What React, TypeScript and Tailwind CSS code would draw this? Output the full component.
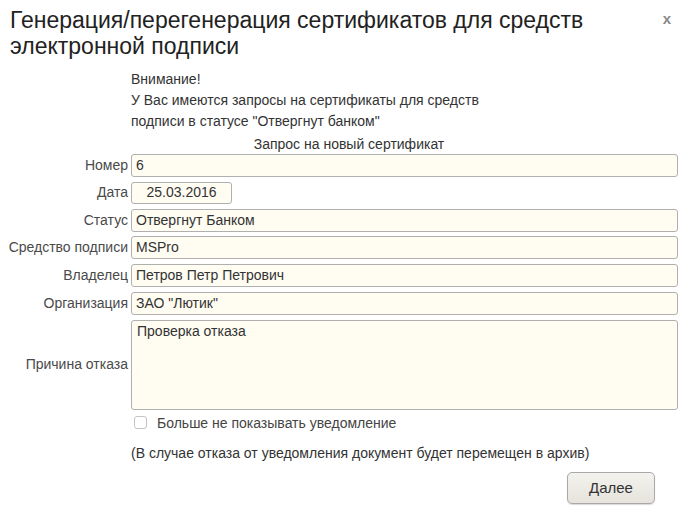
import React from "react";

const font = { fontFamily: '"Liberation Sans", Arial, sans-serif' };

function Field({ label, value, narrow }: { label: string; value: string; narrow?: boolean }) {
  return (
    <>
      <div className="flex items-center justify-end pr-[3px] text-[14px] text-[#4a4a4a] whitespace-nowrap">{label}</div>
      <div className={narrow ? "w-[101px] h-[22px] rounded-[3px] border border-[#b0b0b0] bg-[#fffcf2] flex items-center justify-center text-[14px] text-[#333]" : "h-[23px] rounded-[3px] border border-[#b0b0b0] bg-[#fffcf2] flex items-center pl-[4px] text-[14px] text-[#333]"}>
        {value}
      </div>
    </>
  );
}

export default function App() {
  return (
    <div style={font} className="w-[688px] h-[516px] bg-white text-[#333] flex flex-col">
      {/* Header */}
      <div className="flex justify-between pl-[10px] pr-[17px] pt-[7px]">
        <h1 className="text-[23px] leading-[26px] text-[#222]">
          Генерация/перегенерация сертификатов для средств
          <br />
          электронной подписи
        </h1>
        <span className="text-[15px] leading-[18px] font-bold text-[#8a8a8a] mt-[3px]">x</span>
      </div>

      {/* Notice */}
      <div className="pl-[131px] mt-[10px] text-[14px] leading-[21px] text-[#333]">
        <div>Внимание!</div>
        <div>У Вас имеются запросы на сертификаты для средств</div>
        <div>подписи в статусе "Отвергнут банком"</div>
      </div>
      <div className="pl-[10px] text-center text-[14px] leading-[20px] text-[#333] mt-[2px]">Запрос на новый сертификат</div>

      {/* Form */}
      <div className="grid grid-cols-[131px_1fr] gap-y-[4.8px] pr-[10px]">
        <Field label="Номер" value="6" />
        <Field label="Дата" value="25.03.2016" narrow />
        <Field label="Статус" value="Отвергнут Банком" />
        <Field label="Средство подписи" value="MSPro" />
        <Field label="Владелец" value="Петров Петр Петрович" />
        <Field label="Организация" value={'ЗАО "Лютик"'} />
        <div className="flex items-center justify-end pr-[3px] text-[14px] text-[#4a4a4a]">Причина отказа</div>
        <div className="h-[90px] rounded-[3px] border border-[#b0b0b0] bg-[#fffcf2] px-[5px] pt-[1px] text-[14px] leading-[18px] text-[#333]">
          Проверка отказа
        </div>
      </div>

      {/* Checkbox */}
      <label className="flex items-center pl-[134px] mt-[5px] gap-[10px] text-[14px] leading-[16px] text-[#444]">
        <span className="w-[13px] h-[13px] rounded-[3px] border border-[#c4c4c4] bg-white" />
        Больше не показывать уведомление
      </label>

      <div className="pl-[131px] mt-[14px] text-[14px] leading-[16px] text-[#333]">
        (В случае отказа от уведомления документ будет перемещен в архив)
      </div>

      {/* Footer */}
      <div className="flex justify-end pr-[33px] mt-[11px]">
        <button className="w-[88px] h-[32px] rounded-[5px] border border-[#a9a9a9] bg-gradient-to-b from-[#f4f2ee] to-[#e6e3dc] text-[15px] text-[#333] shadow-[0_1px_1px_rgba(0,0,0,0.15)]">
          Далее
        </button>
      </div>
    </div>
  );
}
